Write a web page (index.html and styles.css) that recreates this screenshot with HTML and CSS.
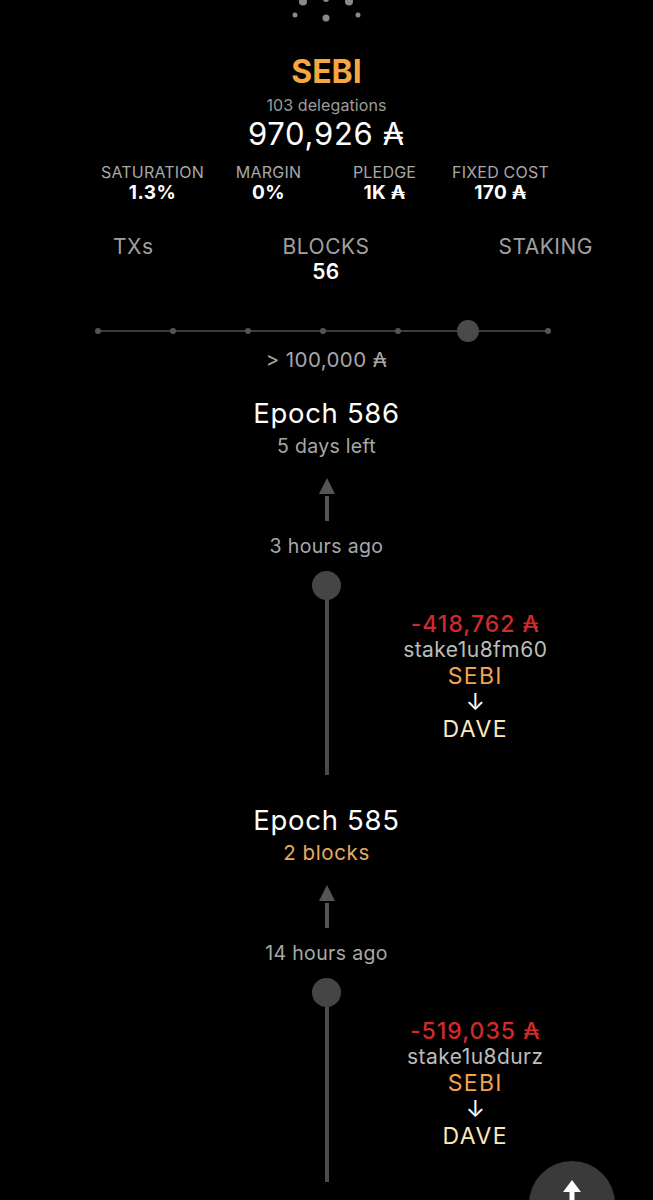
FILE: index.html
```html
<!DOCTYPE html>
<html lang="en">
<head>
<meta charset="utf-8">
<title>SEBI pool</title>
<link rel="stylesheet" href="styles.css">
</head>
<body>
<div class="page">
  <div class="logo">
    <svg width="92" height="24" viewBox="0 0 92 24">
      <circle cx="23" cy="1.5" r="4" fill="#8a8a8a"/>
      <circle cx="46" cy="-1" r="3" fill="#8a8a8a"/>
      <circle cx="69" cy="1.5" r="4" fill="#8a8a8a"/>
      <circle cx="15" cy="15" r="2.5" fill="#8a8a8a"/>
      <circle cx="46" cy="18" r="3.5" fill="#8a8a8a"/>
      <circle cx="78" cy="15" r="2.5" fill="#8a8a8a"/>
    </svg>
  </div>

  <h1 class="pool-name">SEBI</h1>
  <div class="delegations">103 delegations</div>
  <div class="stake-total">970,926 ₳</div>

  <div class="stats">
    <div class="stat"><div class="stat-label">SATURATION</div><div class="stat-value">1.3%</div></div>
    <div class="stat"><div class="stat-label">MARGIN</div><div class="stat-value">0%</div></div>
    <div class="stat"><div class="stat-label">PLEDGE</div><div class="stat-value">1K ₳</div></div>
    <div class="stat"><div class="stat-label">FIXED COST</div><div class="stat-value">170 ₳</div></div>
  </div>

  <div class="tabs">
    <div class="tab">TXs</div>
    <div class="tab"><div>BLOCKS</div><div class="tab-count">56</div></div>
    <div class="tab">STAKING</div>
  </div>

  <div class="slider">
    <div class="track">
      <span class="tick"></span><span class="tick"></span><span class="tick"></span><span class="tick"></span><span class="tick"></span><span class="tick"></span><span class="tick"></span>
      <span class="thumb"></span>
    </div>
  </div>
  <div class="threshold">&gt; 100,000 ₳</div>

  <section class="epoch">
    <div class="epoch-title">Epoch 586</div>
    <div class="epoch-sub">5 days left</div>
    <div class="up-arrow"><span class="tri"></span><span class="stem"></span></div>
    <div class="ago">3 hours ago</div>
    <div class="event">
      <div></div>
      <div class="rail"><span class="dot"></span><span class="line"></span></div>
      <div class="tx">
        <div class="tx-amount">-418,762 ₳</div>
        <div class="tx-addr">stake1u8fm60</div>
        <div class="tx-from">SEBI</div>
        <div class="tx-arrow">↓</div>
        <div class="tx-to">DAVE</div>
      </div>
    </div>
  </section>

  <section class="epoch">
    <div class="epoch-title">Epoch 585</div>
    <div class="epoch-sub blocks">2 blocks</div>
    <div class="up-arrow"><span class="tri"></span><span class="stem"></span></div>
    <div class="ago">14 hours ago</div>
    <div class="event">
      <div></div>
      <div class="rail"><span class="dot"></span><span class="line"></span></div>
      <div class="tx">
        <div class="tx-amount">-519,035 ₳</div>
        <div class="tx-addr">stake1u8durz</div>
        <div class="tx-from">SEBI</div>
        <div class="tx-arrow">↓</div>
        <div class="tx-to">DAVE</div>
      </div>
    </div>
  </section>
</div>

<button class="fab" aria-label="Scroll to top">
  <svg width="24" height="40" viewBox="0 0 24 40">
    <path d="M12 0 L21 12 L14.5 12 L14.5 40 L9.5 40 L9.5 12 L3 12 Z" fill="#ffffff"/>
  </svg>
</button>
</body>
</html>
```

FILE: styles.css
```css
* { box-sizing: border-box; }

html, body {
  margin: 0;
  padding: 0;
  background: #000;
}

body {
  font-family: Inter, "DejaVu Sans", sans-serif;
  color: #fff;
  overflow: hidden;
}

.page {
  width: 653px;
  text-align: center;
}

.logo {
  height: 53px;
  display: flex;
  justify-content: center;
}

.logo svg { display: block; margin-left: -1px; }

.pool-name {
  margin: 0;
  font-size: 32px;
  line-height: 37px;
  font-weight: 700;
  color: #f5a742;
}

.delegations {
  margin-top: 5px;
  font-size: 16px;
  line-height: 20px;
  letter-spacing: 0.1px;
  color: #9c9c9c;
}

.stake-total {
  font-size: 31px;
  line-height: 38px;
  font-weight: 400;
  letter-spacing: 0.7px;
  color: #fff;
}

.stats {
  width: 464px;
  margin: 9px auto 0;
  display: grid;
  grid-template-columns: repeat(4, 1fr);
}

.stat-label {
  font-size: 16px;
  line-height: 20px;
  letter-spacing: 0.2px;
  color: #a8a8a8;
}

.stat-value {
  font-size: 19px;
  line-height: 22px;
  font-weight: 700;
  letter-spacing: 0.4px;
  color: #fff;
}

.tabs {
  margin-top: 31px;
  padding: 0 60px 0 113px;
  display: flex;
  justify-content: space-between;
  align-items: flex-start;
}

.tab {
  font-size: 21px;
  line-height: 24px;
  letter-spacing: 0.5px;
  color: #a0a0a0;
}

.tab-count {
  font-size: 21px;
  line-height: 26px;
  font-weight: 600;
  letter-spacing: 0.3px;
  color: #fff;
}

.slider {
  margin-top: 31px;
  height: 30px;
  display: flex;
  align-items: center;
  padding-left: 95px;
}

.track {
  position: relative;
  width: 456px;
  height: 6px;
  display: flex;
  justify-content: space-between;
  align-items: center;
}

.track::before {
  content: "";
  position: absolute;
  left: 3px;
  right: 3px;
  top: 2px;
  height: 2px;
  background: #3c3c3c;
}

.tick {
  position: relative;
  width: 6px;
  height: 6px;
  border-radius: 50%;
  background: #555;
}

.thumb {
  position: absolute;
  left: 362px;
  top: -8px;
  width: 22px;
  height: 22px;
  border-radius: 50%;
  background: #4a4a4a;
}

.threshold {
  font-size: 20.5px;
  line-height: 28px;
  letter-spacing: 0.4px;
  color: #a8a8a8;
}

.epoch {
  margin-top: 22.5px;
}

.epoch + .epoch {
  margin-top: 28.5px;
}

.epoch-title {
  font-size: 27.5px;
  line-height: 32px;
  letter-spacing: 0.7px;
  color: #fff;
}

.epoch-sub {
  margin-top: 5px;
  font-size: 19.5px;
  line-height: 24px;
  letter-spacing: 0.3px;
  color: #a8a8a8;
}

.epoch-sub.blocks {
  font-size: 20.5px;
  letter-spacing: 0.6px;
  color: #e9a862;
}

.up-arrow {
  margin-top: 20px;
  display: flex;
  flex-direction: column;
  align-items: center;
}

.tri {
  width: 0;
  height: 0;
  border-left: 8.5px solid transparent;
  border-right: 8.5px solid transparent;
  border-bottom: 16px solid #555;
}

.stem {
  margin-top: 2px;
  width: 4px;
  height: 25px;
  background: #555;
}

.ago {
  margin-top: 13px;
  font-size: 19.5px;
  line-height: 24px;
  letter-spacing: 0.35px;
  color: #a8a8a8;
}

.event {
  margin-top: 13px;
  padding: 0 44px;
  display: grid;
  grid-template-columns: 1fr 30px 1fr;
}

.rail {
  display: flex;
  flex-direction: column;
  align-items: center;
}

.dot {
  position: relative;
  z-index: 1;
  width: 29px;
  height: 29px;
  border-radius: 50%;
  background: #454545;
}

.line {
  margin-top: -14.5px;
  width: 4px;
  height: 190px;
  background: #4a4a4a;
}

.tx {
  padding-top: 40px;
  font-size: 23px;
  line-height: 26.25px;
}

.tx-amount {
  color: #d02b2b;
  font-weight: 500;
  letter-spacing: 1px;
}

.tx-addr {
  font-size: 21px;
  letter-spacing: 0.45px;
  color: #bcbcbc;
}

.tx-from {
  letter-spacing: 1.3px;
  color: #f2a34c;
}

.tx-arrow {
  color: #fff;
}

.tx-to {
  letter-spacing: 1.4px;
  color: #fbe8bb;
}

.fab {
  position: fixed;
  left: 529px;
  top: 1161px;
  width: 86px;
  height: 86px;
  border: none;
  border-radius: 50%;
  background: #3a3a3a;
  padding: 0;
  display: flex;
  justify-content: center;
  align-items: flex-start;
  padding-top: 19px;
}

.fab svg { display: block; }
```
